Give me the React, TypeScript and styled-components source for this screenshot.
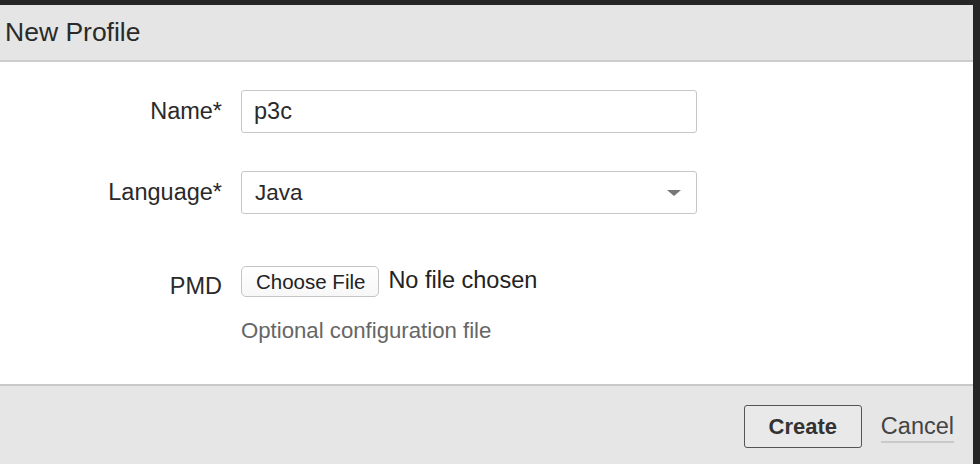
import React from "react";
import styled, { createGlobalStyle } from "styled-components";

const Global = createGlobalStyle`
  html, body { margin: 0; padding: 0; background: #262626; }
  body { font-family: "Liberation Sans", Arial, sans-serif; }
  * { box-sizing: border-box; }
`;

const Screen = styled.div`
  width: 980px;
  height: 464px;
  background: #262626;
  padding: 5px 7px 0 0;
  display: flex;
  overflow: hidden;
`;

const Dialog = styled.div`
  flex: 1;
  display: flex;
  flex-direction: column;
  background: #ffffff;
  color: #333;
`;

const Header = styled.div`
  height: 57px;
  background: #e5e5e5;
  border-bottom: 2px solid #cdcdcd;
  display: flex;
  align-items: center;
  padding: 0 0 0 5px;
  font-size: 26.5px;
  color: #2a2a2a;
`;

const Body = styled.div`
  flex: 1;
  padding-top: 28px;
  display: flex;
  flex-direction: column;
`;

const Row = styled.div<{ $gap: number }>`
  display: grid;
  grid-template-columns: 222px 456px;
  column-gap: 19px;
  align-items: center;
  margin-bottom: ${(p) => p.$gap}px;
`;

const Label = styled.label<{ $shift?: number }>`
  text-align: right;
  font-size: 23.5px;
  color: #2a2a2a;
  padding-top: ${(p) => p.$shift ?? 0}px;
`;

const TextInput = styled.input`
  height: 43px;
  width: 456px;
  border: 1px solid #c6c6c6;
  border-radius: 3px;
  padding: 0 12px;
  font-family: "Liberation Sans", Arial, sans-serif;
  font-size: 23.5px;
  color: #2a2a2a;
  background: #fff;
  outline: none;
`;

const Select = styled.div`
  height: 43px;
  border: 1px solid #c6c6c6;
  border-radius: 3px;
  padding: 0 15px 0 13px;
  display: flex;
  align-items: center;
  justify-content: space-between;
  font-size: 22.5px;
  color: #2a2a2a;
  background: #fff;
`;

const FileField = styled.div`
  display: flex;
  align-items: center;
  gap: 9px;
`;

const FileButton = styled.button`
  height: 31px;
  padding: 0 13px 0 14px;
  border: 1px solid #c4c4c4;
  border-radius: 5px;
  background: linear-gradient(#ffffff, #f7f7f7);
  font-family: "Liberation Sans", Arial, sans-serif;
  font-size: 20.5px;
  color: #222;
`;

const FileStatus = styled.span`
  font-size: 23.5px;
  color: #222;
  margin-top: -2px;
`;

const Hint = styled.div`
  margin-left: 241px;
  font-size: 22.2px;
  color: #666;
  line-height: 26px;
`;

const Footer = styled.div`
  height: 80px;
  background: #e6e6e6;
  border-top: 2px solid #c8c8c8;
  display: flex;
  justify-content: flex-end;
  align-items: flex-start;
  padding: 19px 19px 0 0;
  gap: 19px;
`;

const PrimaryButton = styled.button`
  width: 118px;
  height: 43px;
  border: 1px solid #555;
  border-radius: 3px;
  background: #e9e9e9;
  font-family: "Liberation Sans", Arial, sans-serif;
  font-weight: bold;
  font-size: 22px;
  color: #333;
`;

const CancelLink = styled.a`
  margin-top: 7px;
  font-size: 23.5px;
  color: #444;
  text-decoration: none;
  border-bottom: 2px solid #c9c9c9;
  line-height: 29px;
`;

const Caret = () => (
  <svg width="14" height="6" viewBox="0 0 14 6">
    <path d="M0 0 H14 L7 6 Z" fill="#777" />
  </svg>
);

export default function App() {
  return (
    <>
      <Global />
      <Screen>
        <Dialog>
          <Header>New Profile</Header>
          <Body>
            <Row $gap={38}>
              <Label>Name*</Label>
              <TextInput readOnly defaultValue="p3c" />
            </Row>
            <Row $gap={49}>
              <Label>Language*</Label>
              <Select>
                <span>Java</span>
                <Caret />
              </Select>
            </Row>
            <Row $gap={18}>
              <Label $shift={10}>PMD</Label>
              <FileField>
                <FileButton>Choose File</FileButton>
                <FileStatus>No file chosen</FileStatus>
              </FileField>
            </Row>
            <Hint>Optional configuration file</Hint>
          </Body>
          <Footer>
            <PrimaryButton>Create</PrimaryButton>
            <CancelLink href="#">Cancel</CancelLink>
          </Footer>
        </Dialog>
      </Screen>
    </>
  );
}
